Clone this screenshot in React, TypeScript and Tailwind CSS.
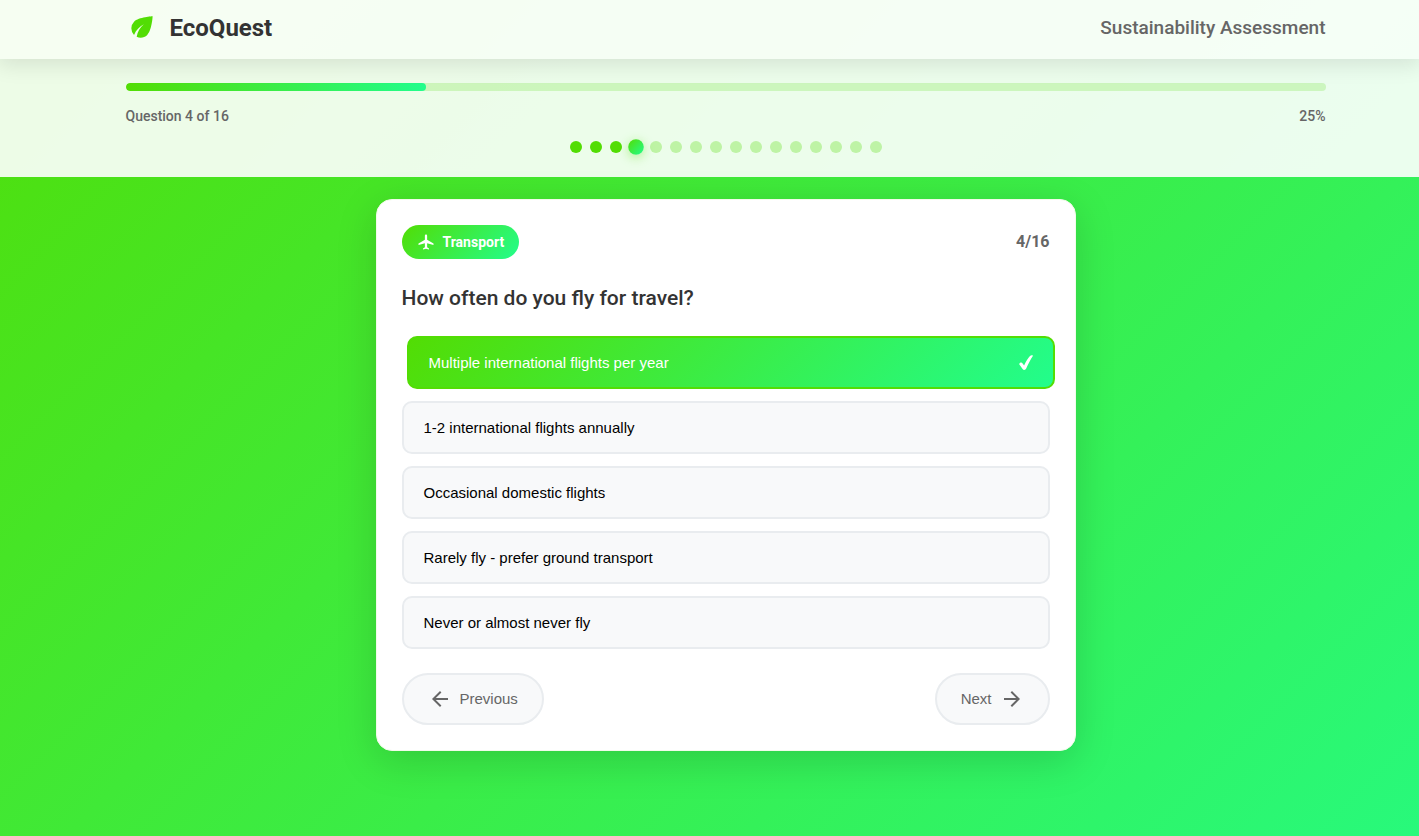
import { useState } from "react";
import { MdArrowBack, MdArrowForward, MdEco } from "react-icons/md";

const TOTAL = 16;
const CURRENT = 4;

const options = [
  "Multiple international flights per year",
  "1-2 international flights annually",
  "Occasional domestic flights",
  "Rarely fly - prefer ground transport",
  "Never or almost never fly",
];

function FlightIcon() {
  return (
    <svg viewBox="0 0 24 24" className="size-[18px]" fill="currentColor" aria-hidden="true">
      <path d="M22 16v-2l-8.5-5V3.5c0-.83-.67-1.5-1.5-1.5s-1.5.67-1.5 1.5V9L2 14v2l8.5-2.5V19L8 20.5V22l4-1 4 1v-1.5L13.5 19v-5.5L22 16z" />
    </svg>
  );
}

function CheckIcon() {
  return (
    <svg viewBox="0 0 14 16" className="mb-0.5 h-4 w-3.5" fill="currentColor" aria-hidden="true">
      <path d="M.2 9.2C.5 7.4 2.8 7.1 3.6 8.4L5.1 10.6C6.8 6.8 8.7 3.4 11 1.1c.9-.9 2-1 3-.4C11.6 4.2 9.3 8.8 7.2 13.6c-.7 1.7-2.8 1.8-3.6.4z" />
    </svg>
  );
}

function Header() {
  return (
    <header className="relative z-10 bg-white/95 pt-[11px] pb-4 pl-8 shadow-[0_4px_20px_2px_rgba(0,0,0,0.1)]">
      <div className="mx-auto flex max-w-[1200px] items-center justify-between">
        <div className="flex items-center gap-3">
          <MdEco className="size-8 text-[#52dd04]" />
          <h1 className="pt-0.5 text-2xl leading-[30px] font-bold text-[#333333]">EcoQuest</h1>
        </div>
        <p className="pt-0.5 text-[19px] leading-[30px] font-medium text-[#666666]">Sustainability Assessment</p>
      </div>
    </header>
  );
}

function dotClass(n: number) {
  if (n < CURRENT) return "bg-[#52dd04]";
  if (n === CURRENT)
    return "scale-130 bg-[linear-gradient(135deg,#52dd04,#22fd8c)] shadow-[0_2px_8px_rgba(82,221,4,0.4)]";
  return "bg-[#52dd04]/30";
}

function Progress() {
  const percent = (CURRENT / TOTAL) * 100;

  return (
    <section className="bg-white/90 py-6 pl-8">
      <div className="mx-auto max-w-[1200px]">
        <div className="h-2 overflow-hidden rounded bg-[#52dd04]/20">
          <div
            className="h-full rounded bg-[linear-gradient(90deg,#52dd04,#22fd8c)]"
            style={{ width: `${percent}%` }}
          />
        </div>
        <div className="mt-4 flex justify-between text-sm leading-[18px] font-medium text-[#666666]">
          <span>
            Question {CURRENT} of {TOTAL}
          </span>
          <span>{percent}%</span>
        </div>
        <div className="mt-4 flex justify-center gap-2">
          {Array.from({ length: TOTAL }, (_, i) => (
            <span key={i} className={`size-3 rounded-full ${dotClass(i + 1)}`} />
          ))}
        </div>
      </div>
    </section>
  );
}

interface OptionProps {
  label: string;
  selected: boolean;
  onSelect: () => void;
}

function Option({ label, selected, onSelect }: OptionProps) {
  return (
    <button
      type="button"
      aria-pressed={selected}
      onClick={onSelect}
      className={`flex h-[53px] w-full items-center justify-between rounded-[10px] border-2 px-5 pt-0.5 text-left text-[15px] ${
        selected
          ? "translate-x-[5px] border-[#52dd04] bg-[linear-gradient(135deg,#52dd04,#22fd8c)] text-white"
          : "border-[#e9ecef] bg-[#f8f9fa] text-black"
      }`}
    >
      <span>{label}</span>
      {selected && <CheckIcon />}
    </button>
  );
}

const navButton =
  "flex h-[52px] items-center gap-2 rounded-full border-2 border-[#e9ecef] bg-[#f8f9fa] px-6 text-[15px] text-[#666666]";

export default function App() {
  const [answer, setAnswer] = useState(0);

  return (
    <div className="min-h-screen bg-[linear-gradient(135deg,#52dd04_-5%,#22fd8c_115%)] font-['Roboto',sans-serif]">
      <Header />
      <Progress />
      <main className="pt-[22px] pb-16 pl-8">
        <div className="mx-auto max-w-[700px] rounded-2xl border border-[#f2fbea] bg-white p-[25px] shadow-[0_10px_40px_rgba(0,0,0,0.15)]">
          <div className="flex items-center justify-between">
            <div className="flex h-[34px] items-center gap-2 rounded-full bg-[linear-gradient(135deg,#52dd04,#22fd8c)] px-[15px] text-sm font-bold text-white">
              <FlightIcon />
              <span>Transport</span>
            </div>
            <span className="font-bold text-[#666666]">
              {CURRENT}/{TOTAL}
            </span>
          </div>

          <h2 className="mt-[25px] mb-6 text-[21px] leading-7 font-medium text-[#333333]">
            How often do you fly for travel?
          </h2>

          <div className="flex flex-col gap-3 font-['Liberation_Sans',Arial,sans-serif]">
            {options.map((label, i) => (
              <Option key={label} label={label} selected={i === answer} onSelect={() => setAnswer(i)} />
            ))}
          </div>

          <div className="mt-6 flex justify-between font-['Liberation_Sans',Arial,sans-serif]">
            <button type="button" className={navButton}>
              <MdArrowBack className="size-6" />
              Previous
            </button>
            <button type="button" className={navButton}>
              Next
              <MdArrowForward className="size-6" />
            </button>
          </div>
        </div>
      </main>
    </div>
  );
}
